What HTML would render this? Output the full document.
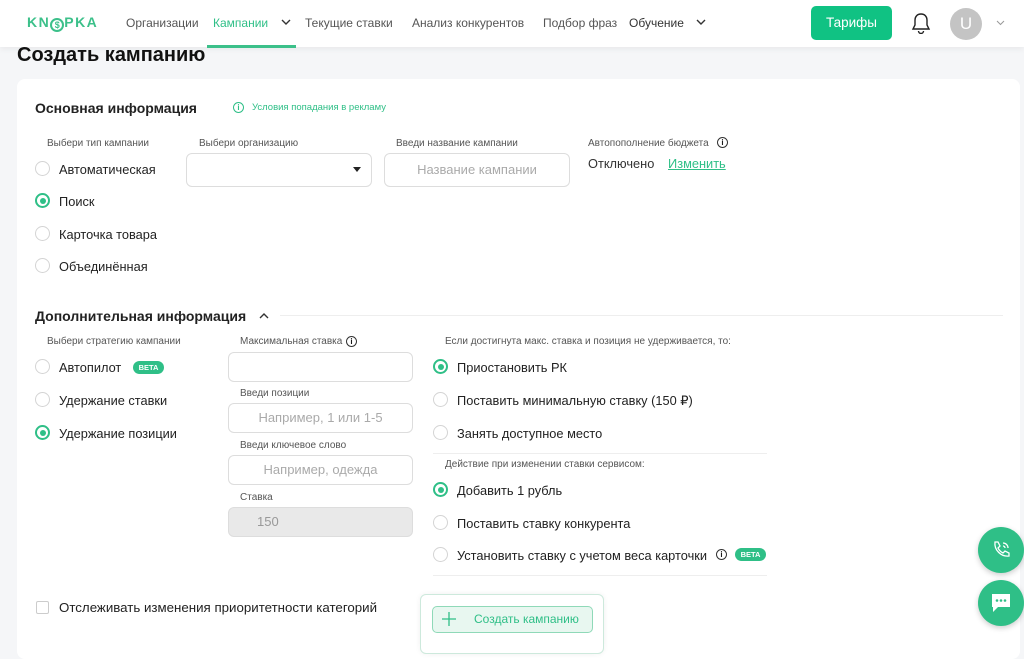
<!DOCTYPE html>
<html><head><meta charset="utf-8"><style>
*{box-sizing:border-box;margin:0;padding:0}
body{width:1024px;height:642px;overflow:hidden;background:#f5f6f8;font-family:"Liberation Sans",sans-serif;color:#1a1a1a;position:relative}
.a{position:absolute;white-space:nowrap}
.hdr{position:absolute;left:0;top:0;width:1024px;height:47px;background:#fff;box-shadow:0 2px 6px rgba(0,0,0,.06)}
.nav{font-size:12px;color:#555;top:16px}
.card{position:absolute;left:17px;top:79px;width:1003px;height:580px;background:#fff;border-radius:8px}
.h2{font-size:14px;font-weight:bold;color:#222}
.lbl{font-size:10px;color:#555}
.r{position:absolute;width:15px;height:15px;border:1.5px solid #d4d4d4;border-radius:50%;background:#fff}
.r.on{border:2px solid #2fbf87}
.r.on::after{content:"";position:absolute;left:2.5px;top:2.5px;width:6px;height:6px;border-radius:50%;background:#2fbf87}
.t{font-size:12.8px;color:#222}
.in{position:absolute;border:1px solid #ddd;border-radius:6px;background:#fff;font-size:13px;color:#aaa;text-align:center}
.beta{position:absolute;background:#2fbf87;color:#fff;font-size:7.5px;font-weight:bold;border-radius:7px;width:31px;height:13px;line-height:13px;text-align:center}
.info{position:absolute;width:11px;height:11px;border:1.2px solid #333;border-radius:50%;font-size:8px;line-height:9px;text-align:center;font-weight:bold}
.line{position:absolute;height:1px;background:#eee}
</style></head><body>
<div class="hdr"></div>
<div class="a" style="left:27px;top:14px;font-size:14px;font-weight:bold;color:#3cc08a;letter-spacing:1.5px">KN<span style="display:inline-block;width:14px;height:14px;border:2px solid #3cc08a;border-radius:50%;font-size:9px;line-height:10px;text-align:center;letter-spacing:0;vertical-align:-1px">$</span>PKA</div>
<div class="a nav" style="left:126px">Организации</div>
<div class="a nav" style="left:213px;color:#2fbf87">Кампании</div>
<svg class="a" style="left:281px;top:19px" width="10" height="7"><path d="M1 1l4 4 4-4" stroke="#333" stroke-width="1.4" fill="none"/></svg>
<div class="a" style="left:207px;top:45px;width:89px;height:3px;background:#3cc08a"></div>
<div class="a nav" style="left:305px">Текущие ставки</div>
<div class="a nav" style="left:412px">Анализ конкурентов</div>
<div class="a nav" style="left:543px">Подбор фраз</div>
<div class="a nav" style="left:629px;color:#333">Обучение</div>
<svg class="a" style="left:696px;top:19px" width="10" height="7"><path d="M1 1l4 4 4-4" stroke="#333" stroke-width="1.4" fill="none"/></svg>
<div class="a" style="left:811px;top:6px;width:81px;height:34px;background:#10c283;border-radius:5px;color:#fff;font-size:13.5px;text-align:center;line-height:34px">Тарифы</div>
<svg class="a" style="left:911px;top:12px" width="20" height="22"><path d="M10 2c-4 0-6 3-6 6v5l-2 4h16l-2-4V8c0-3-2-6-6-6zM7.5 19a2.5 2.5 0 005 0" stroke="#222" stroke-width="1.4" fill="none"/></svg>
<div class="a" style="left:950px;top:8px;width:32px;height:32px;border-radius:50%;background:#c4c4c4;color:#fff;font-size:17px;text-align:center;line-height:32px">U</div>
<svg class="a" style="left:996px;top:20px" width="9" height="6"><path d="M1 1l3.5 3.5L8 1" stroke="#999" stroke-width="1" fill="none"/></svg>

<div class="a" style="left:17px;top:44px;font-size:20px;font-weight:bold;color:#111">Создать кампанию</div>
<div class="card"></div>

<div class="a h2" style="left:35px;top:100px">Основная информация</div>
<div class="info" style="left:233px;top:102px;border-color:#2fbf87;color:#2fbf87">i</div>
<div class="a" style="left:252px;top:102px;font-size:9.5px;color:#2fbf87">Условия попадания в рекламу</div>

<div class="a lbl" style="left:47px;top:138px">Выбери тип кампании</div>
<div class="a lbl" style="left:199px;top:138px">Выбери организацию</div>
<div class="a lbl" style="left:396px;top:138px">Введи название кампании</div>
<div class="a lbl" style="left:588px;top:138px">Автопополнение бюджета</div>
<div class="info" style="left:717px;top:137px">i</div>

<div class="r" style="left:35px;top:161px"></div><div class="a t" style="left:59px;top:162px">Автоматическая</div>
<div class="r on" style="left:35px;top:193px"></div><div class="a t" style="left:59px;top:194px">Поиск</div>
<div class="r" style="left:35px;top:226px"></div><div class="a t" style="left:59px;top:227px">Карточка товара</div>
<div class="r" style="left:35px;top:258px"></div><div class="a t" style="left:59px;top:259px">Объединённая</div>

<div class="in" style="left:186px;top:153px;width:186px;height:34px"></div>
<svg class="a" style="left:353px;top:167px" width="8" height="5"><path d="M0 0h8L4 5z" fill="#222"/></svg>
<div class="in" style="left:384px;top:153px;width:186px;height:34px;line-height:32px">Название кампании</div>
<div class="a t" style="left:588px;top:156px;color:#333">Отключено</div>
<div class="a t" style="left:668px;top:156px;color:#2fbf87;text-decoration:underline">Изменить</div>

<div class="a h2" style="left:35px;top:308px">Дополнительная информация</div>
<svg class="a" style="left:259px;top:312px" width="10" height="7"><path d="M1 6l4-4 4 4" stroke="#333" stroke-width="1.4" fill="none"/></svg>
<div class="line" style="left:280px;top:315px;width:723px"></div>

<div class="a lbl" style="left:47px;top:336px">Выбери стратегию кампании</div>
<div class="a lbl" style="left:240px;top:336px">Максимальная ставка</div>
<div class="info" style="left:346px;top:336px">i</div>
<div class="a lbl" style="left:445px;top:336px">Если достигнута макс. ставка и позиция не удерживается, то:</div>

<div class="r" style="left:35px;top:359px"></div><div class="a t" style="left:59px;top:360px">Автопилот</div>
<div class="beta" style="left:133px;top:361px">BETA</div>
<div class="r" style="left:35px;top:392px"></div><div class="a t" style="left:59px;top:393px">Удержание ставки</div>
<div class="r on" style="left:35px;top:425px"></div><div class="a t" style="left:59px;top:426px">Удержание позиции</div>

<div class="in" style="left:228px;top:352px;width:185px;height:30px"></div>
<div class="a lbl" style="left:240px;top:388px">Введи позиции</div>
<div class="in" style="left:228px;top:403px;width:185px;height:30px;line-height:28px">Например, 1 или 1-5</div>
<div class="a lbl" style="left:240px;top:440px">Введи ключевое слово</div>
<div class="in" style="left:228px;top:455px;width:185px;height:30px;line-height:28px">Например, одежда</div>
<div class="a lbl" style="left:240px;top:492px">Ставка</div>
<div class="in" style="left:228px;top:507px;width:185px;height:30px;line-height:28px;background:#e9e9e9;color:#999;text-align:left;padding-left:28px">150</div>

<div class="r on" style="left:433px;top:359px"></div><div class="a t" style="left:457px;top:360px">Приостановить РК</div>
<div class="r" style="left:433px;top:392px"></div><div class="a t" style="left:457px;top:393px">Поставить минимальную ставку (150 ₽)</div>
<div class="r" style="left:433px;top:425px"></div><div class="a t" style="left:457px;top:426px">Занять доступное место</div>
<div class="line" style="left:433px;top:453px;width:334px"></div>
<div class="a lbl" style="left:445px;top:459px">Действие при изменении ставки сервисом:</div>
<div class="r on" style="left:433px;top:482px"></div><div class="a t" style="left:457px;top:483px">Добавить 1 рубль</div>
<div class="r" style="left:433px;top:515px"></div><div class="a t" style="left:457px;top:516px">Поставить ставку конкурента</div>
<div class="r" style="left:433px;top:547px"></div><div class="a t" style="left:457px;top:548px">Установить ставку с учетом веса карточки</div>
<div class="info" style="left:716px;top:549px">i</div>
<div class="beta" style="left:735px;top:548px">BETA</div>
<div class="line" style="left:433px;top:575px;width:334px"></div>

<div class="a" style="left:36px;top:601px;width:13px;height:13px;border:1.5px solid #ccc;border-radius:2px"></div>
<div class="a" style="left:59px;top:600px;font-size:13.3px;color:#222">Отслеживать изменения приоритетности категорий</div>

<div class="a" style="left:420px;top:594px;width:184px;height:60px;background:#fff;border:1px solid #cde9dc;border-radius:6px;box-shadow:0 0 6px rgba(0,0,0,.06)"></div>
<div class="a" style="left:432px;top:606px;width:161px;height:27px;background:#e8f7f0;border:1px solid #8fd9b8;border-radius:5px"></div>
<svg class="a" style="left:441px;top:611px" width="16" height="16"><path d="M8 1v14M1 8h14" stroke="#2fbf87" stroke-width="1.3"/></svg>
<div class="a" style="left:474px;top:612px;font-size:12px;color:#2fbf87">Создать кампанию</div>

<div class="a" style="left:978px;top:527px;width:46px;height:46px;border-radius:50%;background:#2fbf87;box-shadow:0 2px 6px rgba(0,0,0,.2)"></div>
<svg class="a" style="left:991px;top:540px" width="20" height="20"><path d="M4 2l3 0 2 4-2 2c1 2 3 4 5 5l2-2 4 2v3c-8 1-15-6-14-14z M12 3a5 5 0 015 5 M12 6a2 2 0 012 2" stroke="#fff" stroke-width="1.3" fill="none"/></svg>
<div class="a" style="left:978px;top:580px;width:46px;height:46px;border-radius:50%;background:#2fbf87;box-shadow:0 2px 6px rgba(0,0,0,.2)"></div>
<svg class="a" style="left:990px;top:592px" width="22" height="22"><path d="M2 2h18v13H8l-5 5V15H2z" fill="#fff"/><circle cx="7" cy="8.5" r="1.3" fill="#2fbf87"/><circle cx="11" cy="8.5" r="1.3" fill="#2fbf87"/><circle cx="15" cy="8.5" r="1.3" fill="#2fbf87"/></svg>
</body></html>
